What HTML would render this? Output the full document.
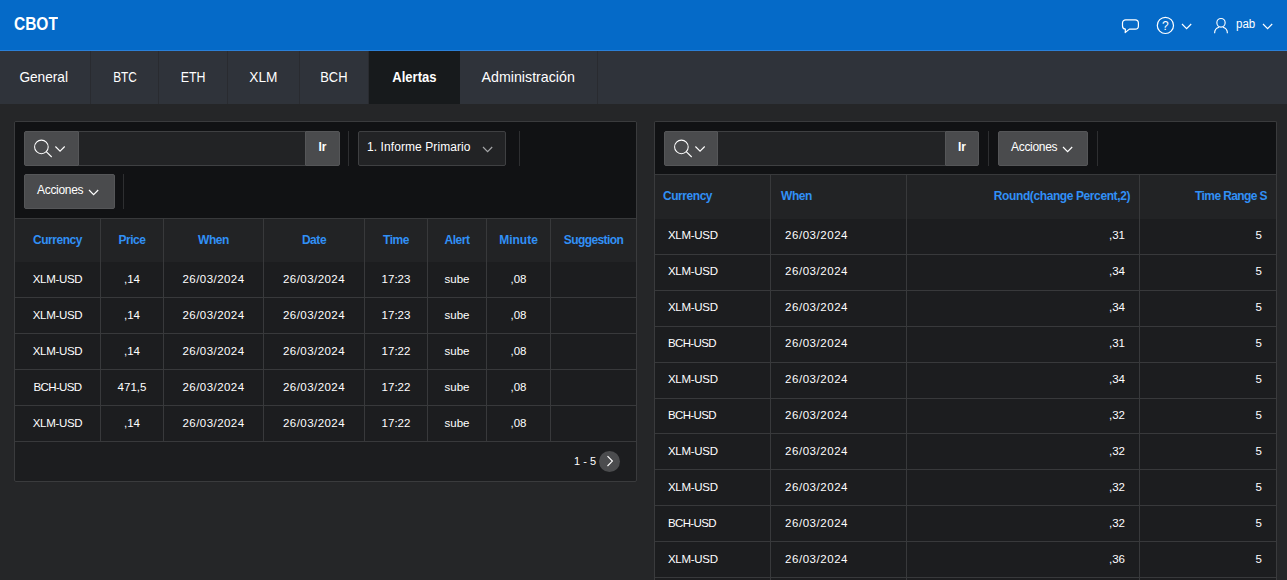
<!DOCTYPE html>
<html lang="es">
<head>
<meta charset="utf-8">
<title>CBOT - Alertas</title>
<style>
*{box-sizing:border-box;margin:0;padding:0}
html,body{width:1287px;height:580px;overflow:hidden;background:#252628;color:#fff;
  font-family:"Liberation Sans",sans-serif;font-size:12px}
.abs{position:absolute}
/* header */
#hdr{position:absolute;left:0;top:0;width:1287px;height:51px;background:#056ac8;border-bottom:1px solid #2a80d8}
#logo{position:absolute;left:14px;top:13px;font-size:18px;line-height:22px;font-weight:bold;color:#fff;transform-origin:0 50%;transform:scaleX(.86)}
#hdr svg{position:absolute;overflow:visible}
#user{position:absolute;left:1236px;top:15px;font-size:12px;line-height:18px;transform-origin:0 50%;transform:scaleX(.96)}
/* nav */
#nav{position:absolute;left:0;top:51px;width:1287px;height:53px;background:#2f333a}
#nav a{position:absolute;top:0;height:53px;line-height:52px;text-align:center;font-size:15px;color:#fff;
  border-right:1px solid #292b30;text-decoration:none;white-space:nowrap}
#nav a span{display:inline-block;transform-origin:50% 50%}
#nav a.on{background:#171a1c;font-weight:bold;border-right:none}
/* regions */
.reg{position:absolute;top:121px;border:1px solid #3a3b3d;background:#1c1d1f;overflow:hidden;border-radius:2px}
.tb{position:absolute;left:0;top:0;right:0;background:#111214}
.btn{position:absolute;background:#4a4b4d;border:1px solid #555658;border-radius:2px;color:#fff;font-size:12px;line-height:31px;text-align:center;white-space:nowrap}
.inp{position:absolute;background:#222325;border:1px solid #3f4042;border-left:none;border-right:none}
.sep{position:absolute;width:1px;height:35px;background:#2e2f31}
.sel{position:absolute;background:#222325;border:1px solid #3f4042;border-radius:2px;line-height:31px;font-size:12px;padding-left:8px;letter-spacing:.08px;white-space:nowrap}
table{position:absolute;border-collapse:separate;border-spacing:0;table-layout:fixed}
th{background:#222325;color:#3190f6;font-weight:bold;font-size:12px;border-left:1px solid #38393b;border-top:1px solid #38393b;white-space:nowrap;overflow:hidden;letter-spacing:-.45px}
td{background:#1c1d1f;color:#fff;font-size:11.5px;border-left:1px solid #38393b;border-bottom:1px solid #38393b;white-space:nowrap;overflow:hidden}
th:first-child,td:first-child{border-left:none}
#t1 th{height:44px;text-align:center;padding:0 0 2px 0}
#t1 td{height:36px;text-align:center;padding:0 0 2px 0}
#t1 td:nth-child(3),#t1 td:nth-child(4),#t2 td:nth-child(2){letter-spacing:.45px}
#t1 td:first-child,#t2 td:first-child{letter-spacing:-.3px}
#t2 th{height:45px;padding:0 9px 2px 8px;text-align:left}
#t2 td{height:36px;padding:0 14px 4px 13px;text-align:left}
#t2 .r{text-align:right}
#t2 th:nth-child(2){padding-left:10px}
#t2 td:nth-child(2){letter-spacing:.55px;padding-left:14px}
#t2 tr:nth-child(7) td{height:35px}
#t2 tr:nth-child(n+7) td{padding-bottom:2px}
.pg{position:absolute;font-size:11px;line-height:14px}
.circ{position:absolute;width:21px;height:21px;border-radius:50%;background:#4b4c4e}
</style>
</head>
<body>
<div id="hdr">
  <div id="logo">CBOT</div>
  <!-- comment bubble -->
  <svg style="left:1121px;top:18px" width="19" height="16" viewBox="0 0 19 16"><path d="M4.700 1.800H14.200A3.200 3.200 0 0 1 17.400 5V7.900A3.200 3.200 0 0 1 14.200 11.100H8.400L4.200 14.500L4.400 11.080A3.200 3.200 0 0 1 1.500 7.900V5A3.200 3.200 0 0 1 4.700 1.800Z" fill="none" stroke="#fff" stroke-width="1.200" stroke-linejoin="round"/></svg>
  <!-- help -->
  <svg style="left:1156px;top:16px" width="19" height="19" viewBox="0 0 19 19"><circle cx="9.4" cy="9.4" r="8.1" fill="none" stroke="#fff" stroke-width="1.2"/><text x="9.4" y="13.6" text-anchor="middle" font-family="Liberation Sans, sans-serif" font-size="12" fill="#fff">?</text></svg>
  <svg style="left:1180.500px;top:22.600px" width="12" height="8" viewBox="0 0 12 8"><path d="M1 1l4.600 4.600L10.200 1" fill="none" stroke="#fff" stroke-width="1.200"/></svg>
  <!-- user -->
  <svg style="left:1213px;top:17px" width="16" height="17" viewBox="0 0 16 17"><ellipse cx="8" cy="5.800" rx="4.150" ry="4.300" fill="none" stroke="#fff" stroke-width="1.150"/><path d="M1.600 16.300C1.600 13 3.400 10.900 6.200 10.300M14.400 16.300C14.400 13 12.600 10.900 9.800 10.300" fill="none" stroke="#fff" stroke-width="1.150"/></svg>
  <div id="user">pab</div>
  <svg style="left:1262px;top:22.600px" width="12" height="8" viewBox="0 0 12 8"><path d="M1 1l4.600 4.600L10.200 1" fill="none" stroke="#fff" stroke-width="1.200"/></svg>
</div>

<div id="nav">
  <a style="left:0;width:91px"><span style="transform:translateX(-1px) scaleX(0.911)">General</span></a>
  <a style="left:91px;width:68px"><span style="transform:translateX(0px) scaleX(0.79)">BTC</span></a>
  <a style="left:159px;width:69px"><span style="transform:translateX(0px) scaleX(0.825)">ETH</span></a>
  <a style="left:228px;width:72px"><span style="transform:translateX(0px) scaleX(0.913)">XLM</span></a>
  <a style="left:300px;width:69px"><span style="transform:translateX(0px) scaleX(0.86)">BCH</span></a>
  <a class="on" style="left:369px;width:91px"><span style="transform:translateX(0px) scaleX(0.87)">Alertas</span></a>
  <a style="left:460px;width:138px"><span style="transform:translateX(0px) scaleX(0.948)">Administración</span></a>
</div>

<!-- LEFT REGION -->
<div class="reg" style="left:14px;width:623px;height:361px">
  <div class="tb" style="height:96px">
    <div class="btn" style="left:9px;top:9px;width:55px;height:35px;border-radius:2px 0 0 2px">
      <svg class="abs" style="left:9px;top:7px" width="34" height="22" viewBox="0 0 34 22"><circle cx="7.400" cy="7.900" r="6.800" fill="none" stroke="#fff" stroke-width="1.050"/><path d="M12.200 12.700l5.500 5.300" stroke="#fff" stroke-width="1.150" fill="none"/><path d="M21.400 7.500l4.650 4.700 4.650-4.700" fill="none" stroke="#fff" stroke-width="1.100"/></svg>
    </div>
    <div class="inp" style="left:64px;top:9px;width:226px;height:35px"></div>
    <div class="btn" style="left:290px;top:9px;width:35px;height:35px;font-weight:bold;border-radius:0 2px 2px 0">Ir</div>
    <div class="sep" style="left:333px;top:9px"></div>
    <div class="sel" style="left:343px;top:9px;width:148px;height:35px">1. Informe Primario
      <svg class="abs" style="left:123px;top:14px" width="12" height="8" viewBox="0 0 12 8"><path d="M1 1l4.600 4.600L10.200 1" fill="none" stroke="#a4a5a7" stroke-width="1.200"/></svg>
    </div>
    <div class="sep" style="left:504px;top:9px"></div>
    <div class="btn" style="left:9px;top:52px;width:91px;height:35px;letter-spacing:-.3px;text-align:left;padding-left:12px">Acciones
      <svg class="abs" style="left:62.500px;top:13.500px" width="12" height="8" viewBox="0 0 12 8"><path d="M1 1l4.600 4.600L10.200 1" fill="none" stroke="#fff" stroke-width="1.200"/></svg>
    </div>
    <div class="sep" style="left:108px;top:52px"></div>
  </div>
  <table id="t1" style="left:0;top:96px;width:621px">
    <colgroup><col style="width:85px"><col style="width:63px"><col style="width:100px"><col style="width:101px"><col style="width:63px"><col style="width:59px"><col style="width:64px"><col style="width:86px"></colgroup>
    <tr><th>Currency</th><th>Price</th><th>When</th><th>Date</th><th>Time</th><th>Alert</th><th style="letter-spacing:0">Minute</th><th style="letter-spacing:-.6px">Suggestion</th></tr>
    <tr><td>XLM-USD</td><td>,14</td><td>26/03/2024</td><td>26/03/2024</td><td>17:23</td><td>sube</td><td>,08</td><td></td></tr>
    <tr><td>XLM-USD</td><td>,14</td><td>26/03/2024</td><td>26/03/2024</td><td>17:23</td><td>sube</td><td>,08</td><td></td></tr>
    <tr><td>XLM-USD</td><td>,14</td><td>26/03/2024</td><td>26/03/2024</td><td>17:22</td><td>sube</td><td>,08</td><td></td></tr>
    <tr><td style="letter-spacing:-.65px">BCH-USD</td><td>471,5</td><td>26/03/2024</td><td>26/03/2024</td><td>17:22</td><td>sube</td><td>,08</td><td></td></tr>
    <tr><td>XLM-USD</td><td>,14</td><td>26/03/2024</td><td>26/03/2024</td><td>17:22</td><td>sube</td><td>,08</td><td></td></tr>
  </table>
  <div class="pg" style="left:559px;top:332px">1 - 5</div>
  <div class="circ" style="left:584px;top:329px">
    <svg class="abs" style="left:0;top:0" width="21" height="21" viewBox="0 0 21 21"><path d="M8.500 5.200L13.400 10.100L8.500 15" fill="none" stroke="#fff" stroke-width="1.150"/></svg>
  </div>
</div>

<!-- RIGHT REGION -->
<div class="reg" style="left:654px;width:623px;height:480px;border-bottom:none">
  <div class="tb" style="height:52px">
    <div class="btn" style="left:9px;top:9px;width:54px;height:35px;border-radius:2px 0 0 2px">
      <svg class="abs" style="left:9px;top:7px" width="34" height="22" viewBox="0 0 34 22"><circle cx="7.400" cy="7.900" r="6.800" fill="none" stroke="#fff" stroke-width="1.050"/><path d="M12.200 12.700l5.500 5.300" stroke="#fff" stroke-width="1.150" fill="none"/><path d="M21.400 7.500l4.650 4.700 4.650-4.700" fill="none" stroke="#fff" stroke-width="1.100"/></svg>
    </div>
    <div class="inp" style="left:63px;top:9px;width:227px;height:35px"></div>
    <div class="btn" style="left:290px;top:9px;width:34px;height:35px;font-weight:bold;border-radius:0 2px 2px 0">Ir</div>
    <div class="sep" style="left:333px;top:9px"></div>
    <div class="btn" style="left:343px;top:9px;width:90px;height:35px;letter-spacing:-.3px;text-align:left;padding-left:12px">Acciones
      <svg class="abs" style="left:62.500px;top:13.500px" width="12" height="8" viewBox="0 0 12 8"><path d="M1 1l4.600 4.600L10.200 1" fill="none" stroke="#fff" stroke-width="1.200"/></svg>
    </div>
    <div class="sep" style="left:442px;top:9px"></div>
  </div>
  <table id="t2" style="left:0;top:52px;width:621px">
    <colgroup><col style="width:115px"><col style="width:136px"><col style="width:233px"><col style="width:137px"></colgroup>
    <tr><th>Currency</th><th>When</th><th class="r" style="letter-spacing:-.4px">Round(change Percent,2)</th><th class="r" style="letter-spacing:-.6px">Time Range S</th></tr>
    <tr><td>XLM-USD</td><td>26/03/2024</td><td class="r">,31</td><td class="r">5</td></tr>
    <tr><td>XLM-USD</td><td>26/03/2024</td><td class="r">,34</td><td class="r">5</td></tr>
    <tr><td>XLM-USD</td><td>26/03/2024</td><td class="r">,34</td><td class="r">5</td></tr>
    <tr><td style="letter-spacing:-.65px">BCH-USD</td><td>26/03/2024</td><td class="r">,31</td><td class="r">5</td></tr>
    <tr><td>XLM-USD</td><td>26/03/2024</td><td class="r">,34</td><td class="r">5</td></tr>
    <tr><td style="letter-spacing:-.65px">BCH-USD</td><td>26/03/2024</td><td class="r">,32</td><td class="r">5</td></tr>
    <tr><td>XLM-USD</td><td>26/03/2024</td><td class="r">,32</td><td class="r">5</td></tr>
    <tr><td>XLM-USD</td><td>26/03/2024</td><td class="r">,32</td><td class="r">5</td></tr>
    <tr><td style="letter-spacing:-.65px">BCH-USD</td><td>26/03/2024</td><td class="r">,32</td><td class="r">5</td></tr>
    <tr><td>XLM-USD</td><td>26/03/2024</td><td class="r">,36</td><td class="r">5</td></tr>
    <tr><td>XLM-USD</td><td>26/03/2024</td><td class="r">,36</td><td class="r">5</td></tr>
  </table>
</div>
</body>
</html>
